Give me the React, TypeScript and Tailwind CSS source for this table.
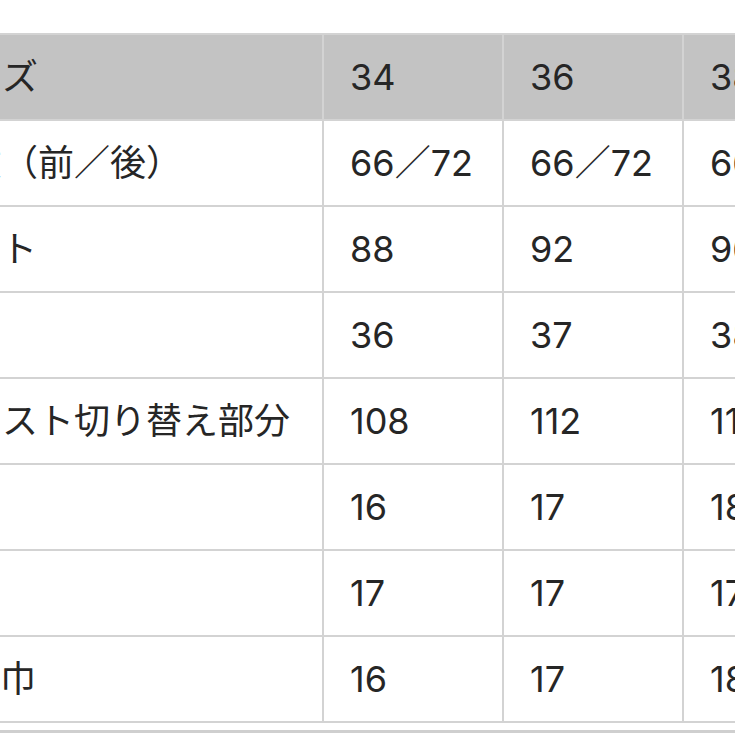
import React from "react";

const rows: { label: string; v: string[]; header?: boolean; pad: string }[] = [
  { label: "サイズ", v: ["34", "36", "38"], header: true, pad: "pl-[26px]" },
  { label: "着丈（前／後）", v: ["66／72", "66／72", "66／72"], pad: "pl-[25px]" },
  { label: "バスト", v: ["88", "92", "96"], pad: "pl-[24px]" },
  { label: "肩幅", v: ["36", "37", "38"], pad: "pl-[20px]" },
  { label: "ウエスト切り替え部分", v: ["108", "112", "116"], pad: "pl-[25px]" },
  { label: "袖丈", v: ["16", "17", "18"], pad: "pl-[20px]" },
  { label: "袖口", v: ["17", "17", "17"], pad: "pl-[20px]" },
  { label: "袖口巾", v: ["16", "17", "18"], pad: "pl-[23px]" },
];

export default function App() {
  return (
    <div
      className="w-[735px] h-[735px] overflow-hidden bg-white text-[#262626]"
      style={{ fontFamily: 'Inter, "Noto Sans CJK JP", sans-serif' }}
    >
      <div className="pt-[33px]">
        <div className="ml-[-97px] w-max border-t-2 border-l-2 border-[#d3d3d3]">
          {rows.map((r, i) => (
            <div
              key={i}
              className={
                "flex h-[86px] border-b-2 border-[#d3d3d3] text-[36px] leading-none " +
                (r.header ? "bg-[#c3c3c3]" : "bg-white")
              }
            >
              <div
                className={
                  "w-[419px] shrink-0 flex items-center border-r-2 border-[#d3d3d3] whitespace-nowrap " +
                  r.pad
                }
              >
                {r.label}
              </div>
              {r.v.map((x, j) => (
                <div
                  key={j}
                  className="w-[180px] shrink-0 flex items-center pl-[26px] border-r-2 border-[#d3d3d3] whitespace-nowrap"
                >
                  {x}
                </div>
              ))}
            </div>
          ))}
        </div>
        <div className="mt-[7px] h-[3px] bg-[#cfcfcf]" />
      </div>
    </div>
  );
}
